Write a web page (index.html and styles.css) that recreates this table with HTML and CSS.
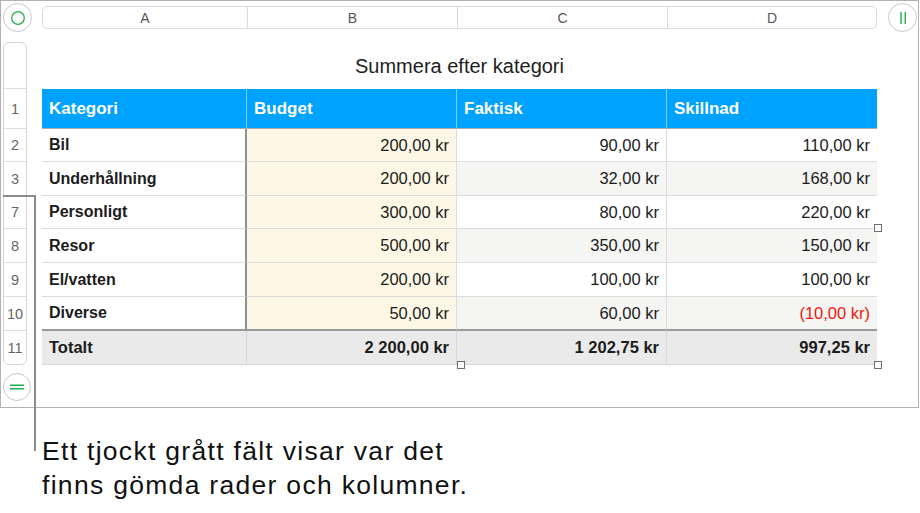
FILE: index.html
```html
<!DOCTYPE html>
<html lang="sv">
<head>
<meta charset="utf-8">
<title>Summera efter kategori</title>
<link rel="stylesheet" href="styles.css">
</head>
<body>
<div class="frame">
  <div class="topbar">
    <div class="btn"><svg width="16" height="16" viewBox="0 0 16 16"><circle cx="8" cy="8" r="6.3" fill="none" stroke="#22ad4f" stroke-width="1.3"/></svg></div>
    <div class="colbar">
      <div class="colhd">A</div>
      <div class="colhd">B</div>
      <div class="colhd">C</div>
      <div class="colhd last">D</div>
    </div>
    <div class="btn btn-right"><svg width="16" height="16" viewBox="0 0 16 16"><path d="M6 2v12M10.3 2v12" stroke="#22ad4f" stroke-width="1.4" fill="none"/></svg></div>
  </div>
  <div class="main">
    <div class="side">
      <div class="rowhdr">
        <div class="rh rh-top"></div>
        <div class="rh h40">1</div>
        <div class="rh h33">2</div>
        <div class="rh h34">3</div>
        <div class="rh h33">7</div>
        <div class="rh h34">8</div>
        <div class="rh h34">9</div>
        <div class="rh h34">10</div>
        <div class="rh h33 rh-last">11</div>
      </div>
      <div class="btn btn-bottom"><svg width="16" height="16" viewBox="0 0 16 16"><path d="M1 6.3h14M1 9.7h14" stroke="#22ad4f" stroke-width="1.4" fill="none"/></svg></div>
    </div>
    <div class="sheetarea">
      <div class="title">Summera efter kategori</div>
      <div class="tablewrap">
        <div class="grid">
          <div class="cell th">Kategori</div>
          <div class="cell th">Budget</div>
          <div class="cell th">Faktisk</div>
          <div class="cell th th-last">Skillnad</div>

          <div class="cell ca">Bil</div>
          <div class="cell cb">200,00 kr</div>
          <div class="cell cc">90,00 kr</div>
          <div class="cell cd">110,00 kr</div>

          <div class="cell ca">Underhållning</div>
          <div class="cell cb">200,00 kr</div>
          <div class="cell cc alt">32,00 kr</div>
          <div class="cell cd alt">168,00 kr</div>

          <div class="cell ca">Personligt</div>
          <div class="cell cb">300,00 kr</div>
          <div class="cell cc">80,00 kr</div>
          <div class="cell cd">220,00 kr</div>

          <div class="cell ca">Resor</div>
          <div class="cell cb">500,00 kr</div>
          <div class="cell cc alt">350,00 kr</div>
          <div class="cell cd alt">150,00 kr</div>

          <div class="cell ca">El/vatten</div>
          <div class="cell cb">200,00 kr</div>
          <div class="cell cc">100,00 kr</div>
          <div class="cell cd">100,00 kr</div>

          <div class="cell ca lastrow">Diverse</div>
          <div class="cell cb lastrow">50,00 kr</div>
          <div class="cell cc alt lastrow">60,00 kr</div>
          <div class="cell cd alt lastrow neg">(10,00 kr)</div>

          <div class="cell tot tot-a">Totalt</div>
          <div class="cell tot">2 200,00 kr</div>
          <div class="cell tot">1 202,75 kr</div>
          <div class="cell tot tot-d">997,25 kr</div>
        </div>
        <span class="handle h1"></span>
        <span class="handle h2"></span>
        <span class="handle h3"></span>
      </div>
    </div>
  </div>
</div>
<div class="callout"></div>
<p class="caption">Ett tjockt grått fält visar var det<br>finns gömda rader och kolumner.</p>
</body>
</html>
```

FILE: styles.css
```css
html, body {
  margin: 0;
  padding: 0;
  background: #fff;
}
body {
  position: relative;
  width: 920px;
  height: 513px;
  overflow: hidden;
  font-family: "Liberation Sans", Arial, sans-serif;
  color: #1c1c1c;
}
.frame {
  box-sizing: border-box;
  width: 919px;
  height: 408px;
  border: 1px solid #b1b1b1;
}
.topbar {
  display: flex;
  align-items: center;
  height: 29px;
  margin: 2px 0 0 2px;
}
.btn {
  box-sizing: border-box;
  width: 29px;
  height: 29px;
  border: 1px solid #c9c9c9;
  border-radius: 50%;
  background: #fff;
  display: flex;
  align-items: center;
  justify-content: center;
  flex: none;
}
.btn-right {
  margin-left: 11px;
}
.colbar {
  box-sizing: border-box;
  margin-left: 10px;
  width: 835px;
  height: 23px;
  border: 1px solid #dadada;
  border-radius: 5px;
  display: grid;
  grid-template-columns: 205px 210px 210px 208px;
}
.colhd {
  box-sizing: border-box;
  border-right: 1px solid #dadada;
  display: flex;
  align-items: center;
  justify-content: center;
  font-size: 14px;
  color: #555;
}
.colhd.last {
  border-right: none;
}
.main {
  display: flex;
  margin: 10px 0 0 2px;
}
.side {
  display: flex;
  flex-direction: column;
  width: 24px;
}
.rowhdr {
  box-sizing: border-box;
  width: 24px;
  border: 1px solid #d6d6d6;
  border-radius: 6px;
  display: flex;
  flex-direction: column;
}
.rh {
  box-sizing: border-box;
  border-bottom: 1px solid #dcdcdc;
  display: flex;
  align-items: center;
  justify-content: center;
  font-size: 14.5px;
  color: #666;
}
.rh-top { height: 46px; }
.h40 { height: 40px; }
.h33 { height: 33px; }
.h34 { height: 34px; }
.rh-last { border-bottom: none; }
.btn-bottom {
  width: 28px;
  height: 28px;
  margin-top: 8px;
}
.sheetarea {
  margin-left: 15px;
  width: 835px;
}
.title {
  height: 47px;
  box-sizing: border-box;
  padding-top: 13px;
  line-height: 23px;
  font-size: 20px;
  text-align: center;
  color: #1e1e1e;
}
.tablewrap {
  position: relative;
}
.grid {
  display: grid;
  grid-template-columns: 205px 210px 210px 210px;
  grid-template-rows: 40px 33px 34px 33px 34px 34px 34px 34px;
  font-size: 16.5px;
}
.cell {
  box-sizing: border-box;
  display: flex;
  align-items: center;
  justify-content: flex-end;
  padding: 0 7px;
  border-bottom: 1px solid #dcdcdc;
  border-right: 1px solid #dcdcdc;
  white-space: nowrap;
}
.th {
  background: #00a2ff;
  color: #fff;
  font-weight: bold;
  font-size: 17px;
  justify-content: flex-start;
  border-right: 1px solid #7fd0ff;
  border-bottom: 1px solid #a9a9a9;
}
.th-last {
  border-right: none;
}
.ca {
  justify-content: flex-start;
  font-weight: bold;
  font-size: 16px;
  background: #fff;
  border-right: 2px solid #8f8f8f;
}
.cb {
  background: #fdf8e6;
}
.cc, .cd {
  background: #fff;
}
.alt {
  background: #f5f5f3;
}
.cd {
  border-right: none;
}
.lastrow {
  border-bottom: 2px solid #9a9a9a;
}
.neg {
  color: #f2160f;
}
.tot {
  background: #eaeaea;
  font-weight: bold;
  font-size: 16.5px;
  border-right: 1px solid #d6d6d6;
  border-bottom: 1px solid #d9d9d9;
}
.tot-a {
  justify-content: flex-start;
}
.tot-d {
  border-right: none;
}
.handle {
  position: absolute;
  box-sizing: border-box;
  width: 8px;
  height: 8px;
  background: #fff;
  border: 1px solid #6e6e6e;
}
.h1 { left: 832px; top: 135px; }
.h2 { left: 415px; top: 272px; }
.h3 { left: 832px; top: 272px; }
.callout {
  position: absolute;
  left: 3px;
  top: 195px;
  width: 33px;
  height: 256px;
  box-sizing: border-box;
  border-top: 2px solid #8c8c8c;
  border-right: 2px solid #8c8c8c;
}
.caption {
  margin: 26px 0 0 42px;
  font-size: 26.5px;
  line-height: 34px;
  letter-spacing: 1.3px;
  color: #111;
}
```
